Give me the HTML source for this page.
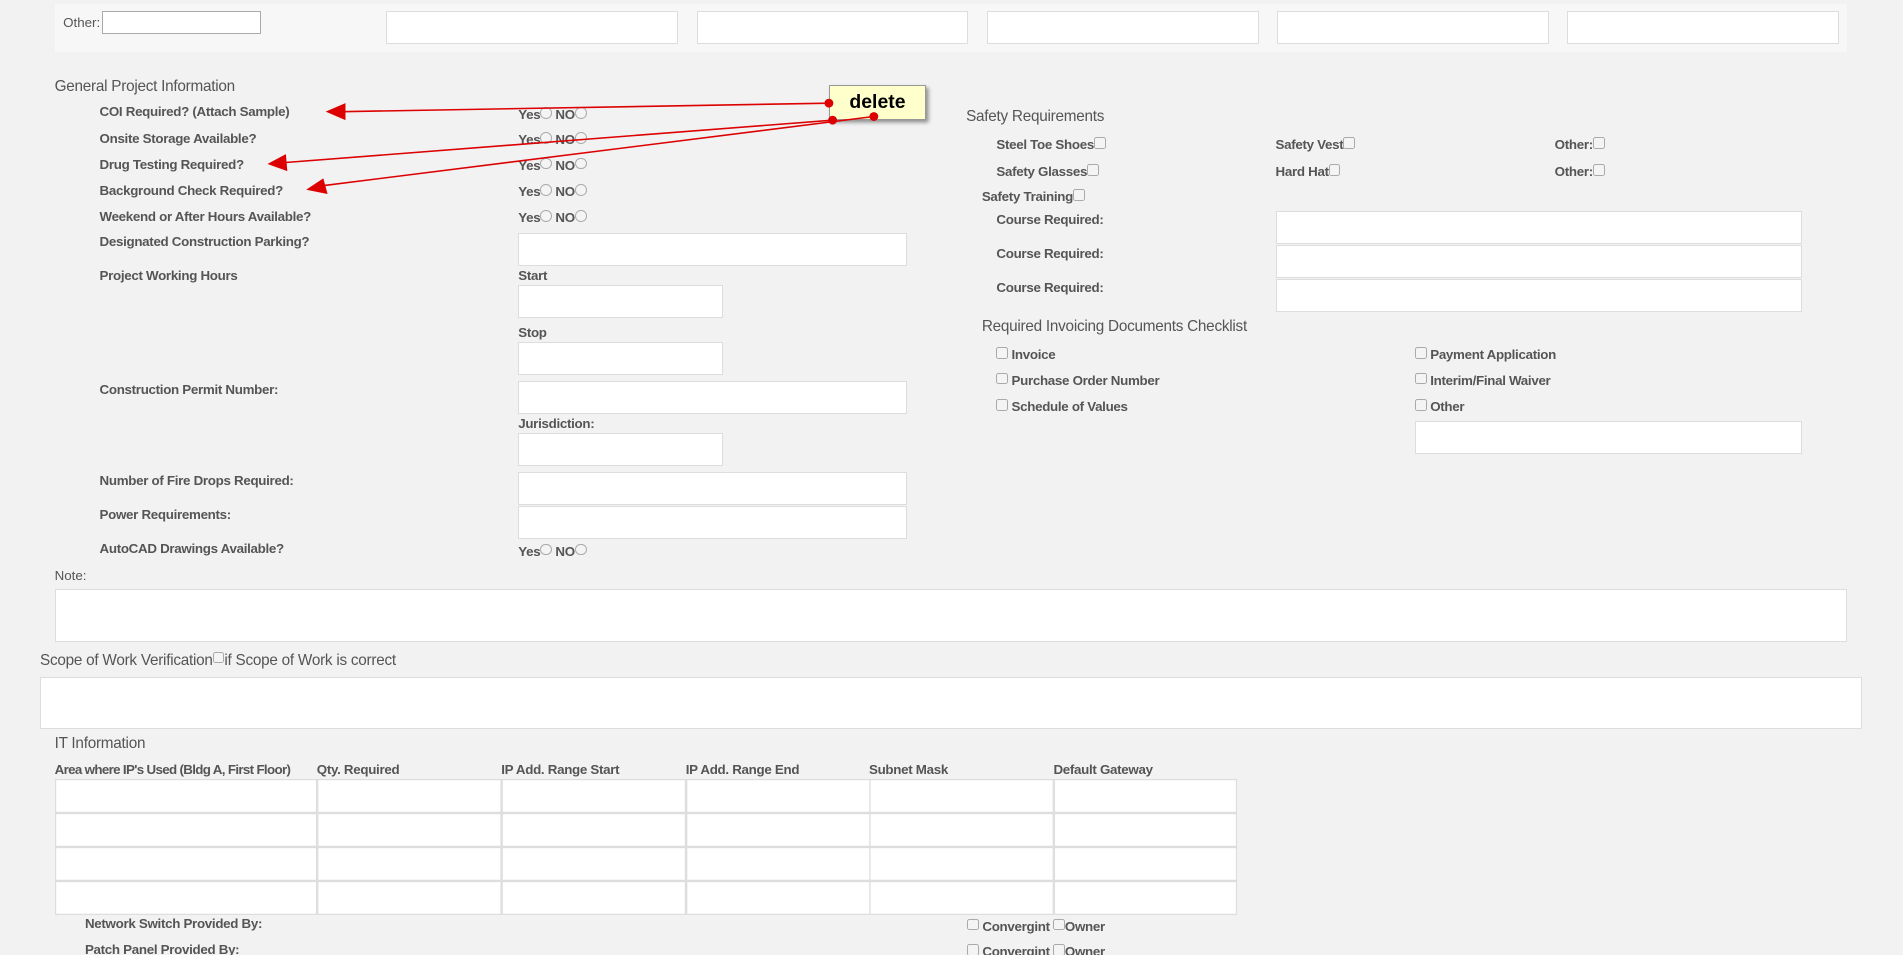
<!DOCTYPE html>
<html><head><meta charset="utf-8"><style>
html,body{margin:0;padding:0;background:#f2f2f2;overflow:hidden}
#w{position:relative;width:1568px;height:787px;zoom:1.21365;font-family:"Liberation Sans",sans-serif;color:#555}
.a{position:absolute;white-space:nowrap;line-height:14px}
.b{font-weight:bold;font-size:11px;letter-spacing:-0.25px}
.h{font-size:12.6px;letter-spacing:-0.2px}
.i{position:absolute;background:#fff;border:1px solid #ddd;box-sizing:border-box}
.cb{display:inline-block;width:8px;height:8px;border:1px solid #aaa;border-radius:2px;background:#f4f4f4;vertical-align:top;margin-top:0}
.rd{display:inline-block;width:8px;height:8px;border:1px solid #aaa;border-radius:50%;background:#f4f4f4;vertical-align:top}
</style></head><body><div id="w">
<div style="position:absolute;left:45px;top:3px;width:1477px;height:40px;background:#f7f7f7"></div>
<div class="a" style="left:52px;top:12px;font-size:11px">Other:</div>
<div class="i" style="left:84px;top:9px;width:131px;height:19px;border-color:#aaa"></div>
<div class="i" style="left:318px;top:9px;width:241px;height:27px"></div>
<div class="i" style="left:574px;top:9px;width:224px;height:27px"></div>
<div class="i" style="left:813px;top:9px;width:224px;height:27px"></div>
<div class="i" style="left:1052px;top:9px;width:224px;height:27px"></div>
<div class="i" style="left:1291px;top:9px;width:224px;height:27px"></div>

<div class="a h" style="left:45px;top:64px">General Project Information</div>
<div class="a b" style="left:82px;top:86px">COI Required? (Attach Sample)</div>
<div class="a b" style="left:82px;top:108px">Onsite Storage Available?</div>
<div class="a b" style="left:82px;top:129px">Drug Testing Required?</div>
<div class="a b" style="left:82px;top:151px">Background Check Required?</div>
<div class="a b" style="left:82px;top:172px">Weekend or After Hours Available?</div>
<div class="a b" style="left:82px;top:193px">Designated Construction Parking?</div>
<div class="a b" style="left:82px;top:221px">Project Working Hours</div>
<div class="a b" style="left:82px;top:315px">Construction Permit Number:</div>
<div class="a b" style="left:82px;top:390px">Number of Fire Drops Required:</div>
<div class="a b" style="left:82px;top:418px">Power Requirements:</div>
<div class="a b" style="left:82px;top:446px">AutoCAD Drawings Available?</div>
<div class="a b" style="left:427px;top:88px">Yes<span class="rd"></span> NO<span class="rd"></span></div>
<div class="a b" style="left:427px;top:109px">Yes<span class="rd"></span> NO<span class="rd"></span></div>
<div class="a b" style="left:427px;top:130px">Yes<span class="rd"></span> NO<span class="rd"></span></div>
<div class="a b" style="left:427px;top:152px">Yes<span class="rd"></span> NO<span class="rd"></span></div>
<div class="a b" style="left:427px;top:173px">Yes<span class="rd"></span> NO<span class="rd"></span></div>
<div class="a b" style="left:427px;top:448px">Yes<span class="rd"></span> NO<span class="rd"></span></div>
<div class="i" style="left:427px;top:192px;width:320px;height:27px"></div>
<div class="a b" style="left:427px;top:221px">Start</div>
<div class="i" style="left:427px;top:235px;width:169px;height:27px"></div>
<div class="a b" style="left:427px;top:268px">Stop</div>
<div class="i" style="left:427px;top:282px;width:169px;height:27px"></div>
<div class="i" style="left:427px;top:314px;width:320px;height:27px"></div>
<div class="a b" style="left:427px;top:343px">Jurisdiction:</div>
<div class="i" style="left:427px;top:357px;width:169px;height:27px"></div>
<div class="i" style="left:427px;top:389px;width:320px;height:27px"></div>
<div class="i" style="left:427px;top:417px;width:320px;height:27px"></div>

<div class="a h" style="left:796px;top:89px">Safety Requirements</div>
<div class="a b" style="left:821px;top:113px">Steel Toe Shoes<span class="cb"></span></div>
<div class="a b" style="left:1051px;top:113px">Safety Vest<span class="cb"></span></div>
<div class="a b" style="left:1281px;top:113px">Other:<span class="cb"></span></div>
<div class="a b" style="left:821px;top:135px">Safety Glasses<span class="cb"></span></div>
<div class="a b" style="left:1051px;top:135px">Hard Hat<span class="cb"></span></div>
<div class="a b" style="left:1281px;top:135px">Other:<span class="cb"></span></div>
<div class="a b" style="left:809px;top:156px">Safety Training<span class="cb"></span></div>
<div class="a b" style="left:821px;top:175px">Course Required:</div>
<div class="a b" style="left:821px;top:203px">Course Required:</div>
<div class="a b" style="left:821px;top:231px">Course Required:</div>
<div class="i" style="left:1051px;top:174px;width:434px;height:27px"></div>
<div class="i" style="left:1051px;top:202px;width:434px;height:27px"></div>
<div class="i" style="left:1051px;top:230px;width:434px;height:27px"></div>
<div class="a h" style="left:809px;top:262px">Required Invoicing Documents Checklist</div>
<div class="a b" style="left:821px;top:286px"><span class="cb"></span> Invoice</div>
<div class="a b" style="left:821px;top:307px"><span class="cb"></span> Purchase Order Number</div>
<div class="a b" style="left:821px;top:329px"><span class="cb"></span> Schedule of Values</div>
<div class="a b" style="left:1166px;top:286px"><span class="cb"></span> Payment Application</div>
<div class="a b" style="left:1166px;top:307px"><span class="cb"></span> Interim/Final Waiver</div>
<div class="a b" style="left:1166px;top:329px"><span class="cb"></span> Other</div>
<div class="i" style="left:1166px;top:347px;width:319px;height:27px"></div>

<div class="a" style="left:45px;top:468px;font-size:11px">Note:</div>
<div class="i" style="left:45px;top:485px;width:1477px;height:44px"></div>
<div class="a h" style="left:33px;top:537px">Scope of Work Verification<span class="cb"></span>if Scope of Work is correct</div>
<div class="i" style="left:33px;top:558px;width:1501px;height:43px"></div>
<div class="a h" style="left:45px;top:606px">IT Information</div>
<div class="a b" style="left:45px;top:628px;letter-spacing:-0.55px">Area where IP's Used (Bldg A, First Floor)</div>
<div class="a b" style="left:261px;top:628px">Qty. Required</div>
<div class="a b" style="left:413px;top:628px">IP Add. Range Start</div>
<div class="a b" style="left:565px;top:628px">IP Add. Range End</div>
<div class="a b" style="left:716px;top:628px">Subnet Mask</div>
<div class="a b" style="left:868px;top:628px">Default Gateway</div>
<svg style="position:absolute;left:45px;top:642px" width="975" height="112">
<g fill="#fff" stroke="#ddd" stroke-width="1">
<rect x=".5" y=".5" width="215" height="27"/><rect x="216.5" y=".5" width="151" height="27"/><rect x="368.5" y=".5" width="151" height="27"/><rect x="520.5" y=".5" width="151" height="27"/><rect x="671.5" y=".5" width="151" height="27"/><rect x="823.5" y=".5" width="150" height="27"/>
<rect x=".5" y="28.5" width="215" height="27"/><rect x="216.5" y="28.5" width="151" height="27"/><rect x="368.5" y="28.5" width="151" height="27"/><rect x="520.5" y="28.5" width="151" height="27"/><rect x="671.5" y="28.5" width="151" height="27"/><rect x="823.5" y="28.5" width="150" height="27"/>
<rect x=".5" y="56.5" width="215" height="27"/><rect x="216.5" y="56.5" width="151" height="27"/><rect x="368.5" y="56.5" width="151" height="27"/><rect x="520.5" y="56.5" width="151" height="27"/><rect x="671.5" y="56.5" width="151" height="27"/><rect x="823.5" y="56.5" width="150" height="27"/>
<rect x=".5" y="84.5" width="215" height="27"/><rect x="216.5" y="84.5" width="151" height="27"/><rect x="368.5" y="84.5" width="151" height="27"/><rect x="520.5" y="84.5" width="151" height="27"/><rect x="671.5" y="84.5" width="151" height="27"/><rect x="823.5" y="84.5" width="150" height="27"/>
</g></svg>
<div class="a b" style="left:70px;top:755px">Network Switch Provided By:</div>
<div class="a b" style="left:70px;top:776px">Patch Panel Provided By:</div>
<div class="a b" style="left:797px;top:757px"><span class="cb"></span> Convergint <span class="cb"></span>Owner</div>
<div class="a b" style="left:797px;top:778px"><span class="cb"></span> Convergint <span class="cb"></span>Owner</div>

<div style="position:absolute;left:683px;top:70px;width:80px;height:29px;background:#ffffcc;border:1px solid #999;box-shadow:2px 2px 3px rgba(0,0,0,.4);box-sizing:border-box;font:bold 16px 'Liberation Sans',sans-serif;color:#000;text-align:center;line-height:27px">delete</div>
<svg style="position:absolute;left:0;top:0" width="1568" height="787">
<g stroke="#d00" stroke-width="1.3" fill="#d00">
<line x1="683" y1="85" x2="282" y2="92"/><polygon points="270,92 284,86 284,98"/>
<line x1="686" y1="99" x2="234" y2="134"/><polygon points="222,135 235,128 236,140"/>
<line x1="720" y1="96" x2="266" y2="153"/><polygon points="254,156 266,148 269,159"/>
<circle cx="683" cy="85" r="3"/><circle cx="686" cy="99" r="3"/><circle cx="720" cy="96" r="3"/>
</g></svg>
</div></body></html>
